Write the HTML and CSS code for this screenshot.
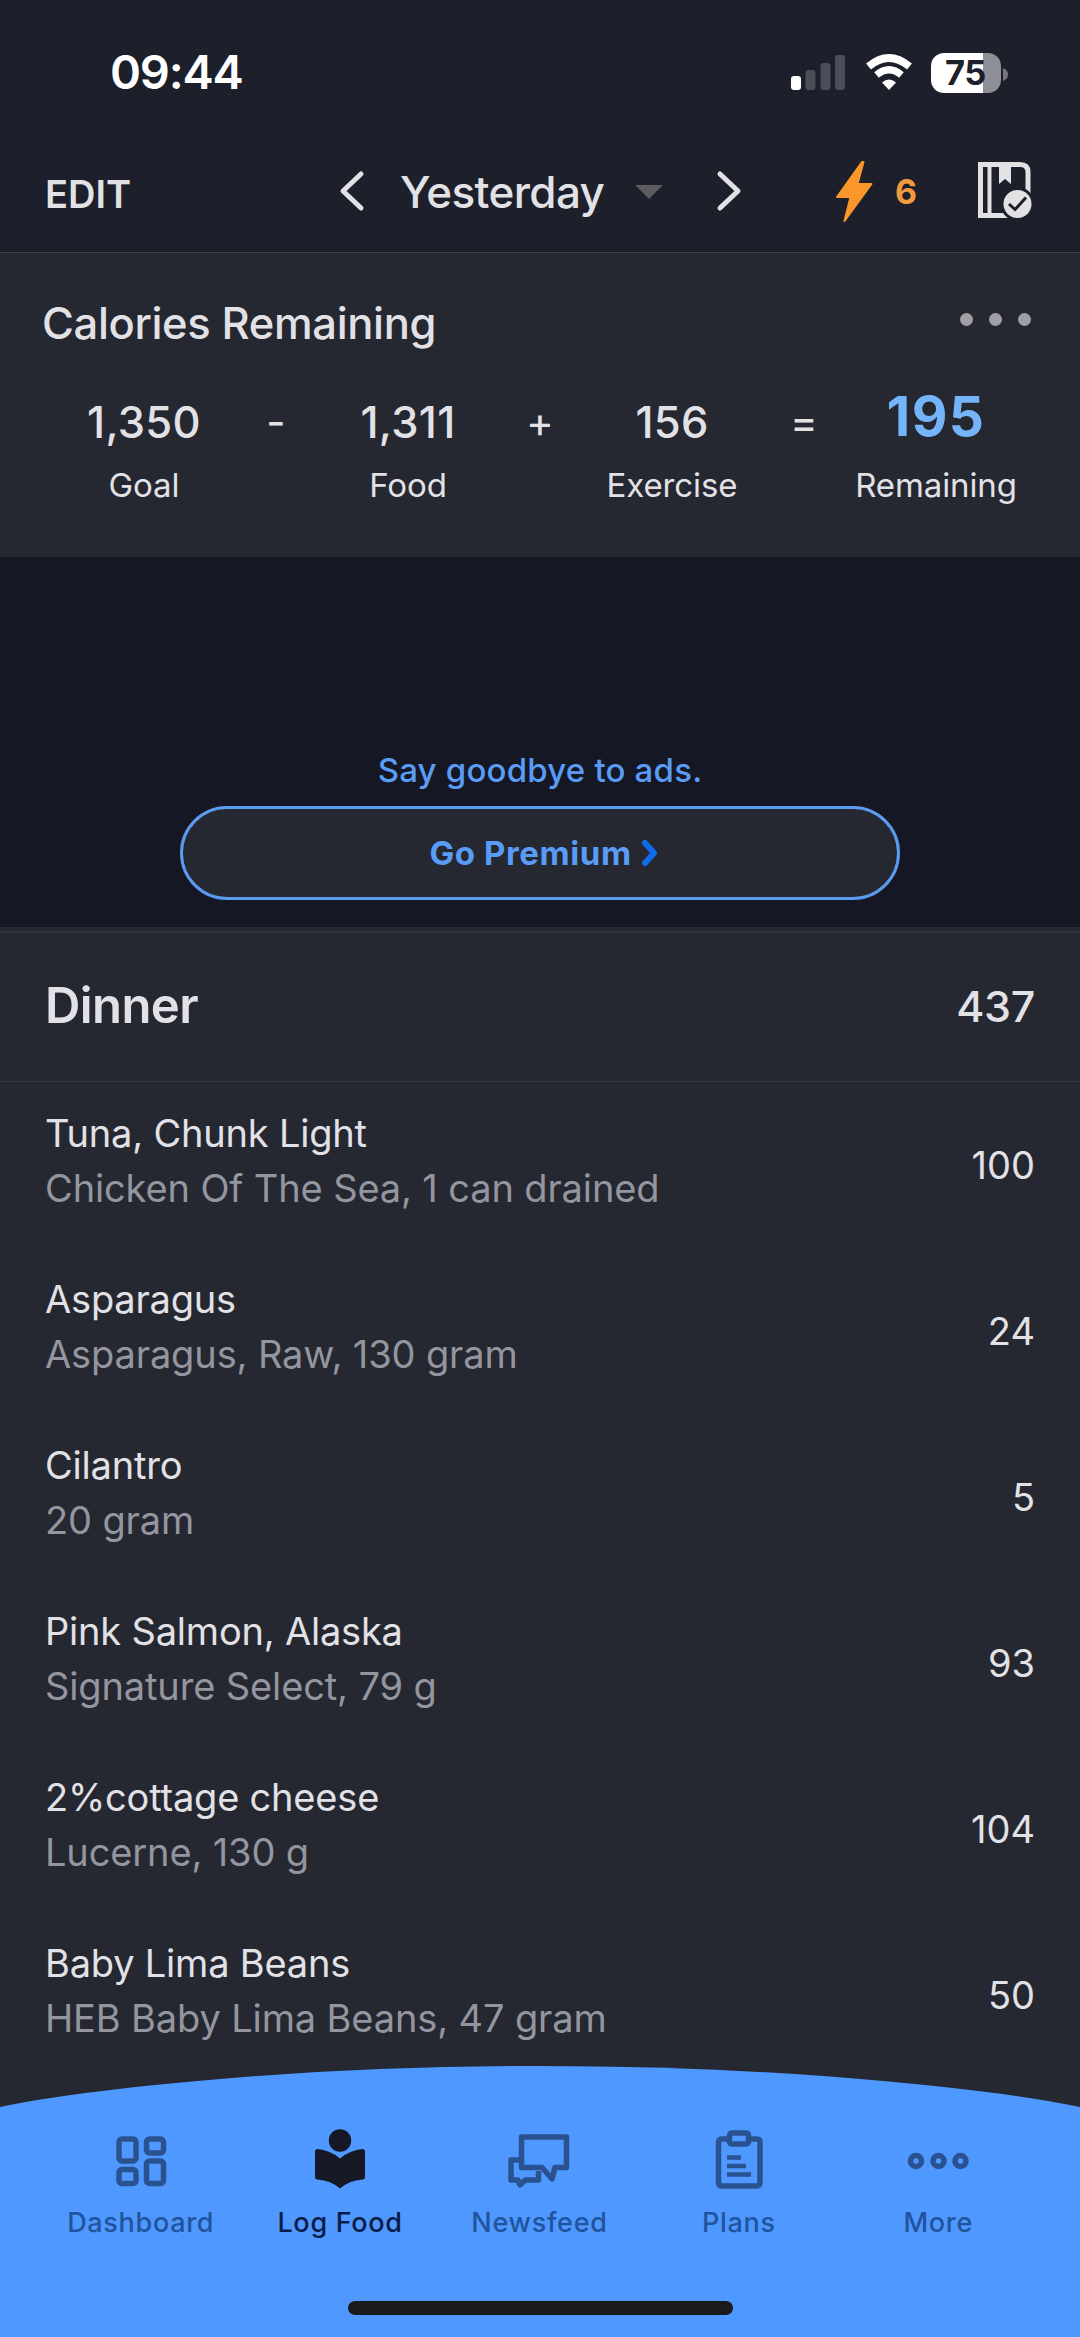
FILE: index.html
```html
<!DOCTYPE html>
<html lang="en">
<head>
<meta charset="utf-8">
<title>Diary</title>
<link rel="stylesheet" href="styles.css">
</head>
<body>
<div class="app">
  <div class="status">
    <span class="time">09:44</span>
    <div class="status-icons">
      <svg width="56" height="38" viewBox="0 0 56 38">
        <rect x="1" y="22" width="10" height="14" rx="3" fill="#fff"/>
        <g fill="#4c4d58"><rect x="15.500" y="16" width="10" height="20" rx="3"/><rect x="30.500" y="9" width="10" height="27" rx="3"/><rect x="45" y="1" width="10" height="35" rx="3"/></g>
      </svg>
      <svg class="wifi" width="48" height="38" viewBox="0 0 48 38" fill="none" stroke="#fff">
        <path d="M3.500 12.500Q24-4.500 44.500 12.500" stroke-width="7.500"/>
        <path d="M11.500 21Q24 10.500 36.500 21" stroke-width="7"/>
        <path d="M24 36L17 28.500Q24 22.500 31 28.500Z" fill="#fff" stroke="none"/>
      </svg>
      <div class="battery"><span class="level">75</span></div>
      <svg class="cap" width="5" height="13" viewBox="0 0 5 13"><path d="M0 0Q5 2 5 6.500T0 13Z" fill="#74757d"/></svg>
    </div>
  </div>
  <header class="nav">
    <span class="edit">EDIT</span>
    <svg class="prev" width="26" height="42" viewBox="0 0 26 42"><path d="M22 4L4 21L22 38"/></svg>
    <span class="day">Yesterday</span>
    <svg class="caret" width="28" height="14" viewBox="0 0 28 14"><path d="M0 0H28L14 14Z" fill="#5c5c5e"/></svg>
    <svg class="next" width="26" height="42" viewBox="0 0 26 42"><path d="M4 4L22 21L4 38"/></svg>
    <svg class="bolt" width="38" height="64" viewBox="0 0 38 64"><path d="M27 3L2 38H15.500L9.500 62L36.500 25H22.500L28.500 3Z" fill="#fa962b" stroke="#fa962b" stroke-width="2" stroke-linejoin="round"/></svg>
    <span class="streak">6</span>
    <svg class="book" width="54" height="58" viewBox="0 0 54 58" fill="none">
      <path d="M50 42V10Q50 2.500 42 2.500H2.500V53.500H36" stroke="#e2e2e4" stroke-width="5"/>
      <path d="M11.500 2V55" stroke="#e2e2e4" stroke-width="4"/>
      <path d="M21 2H33V22L27 17L21 22Z" fill="#e2e2e4"/>
      <circle cx="39.500" cy="42" r="15.500" fill="#e2e2e4" stroke="#1d1f2a" stroke-width="3"/>
      <path d="M31 42L37 47.500L48 35.500" stroke="#1d1f2a" stroke-width="3"/>
    </svg>
  </header>
  <section class="summary">
    <div class="summary-head"><h2>Calories Remaining</h2><div class="dots"><i></i><i></i><i></i></div></div>
    <div class="equation">
      <div class="term"><b>1,350</b><span>Goal</span></div>
      <div class="op">-</div>
      <div class="term"><b>1,311</b><span>Food</span></div>
      <div class="op">+</div>
      <div class="term"><b>156</b><span>Exercise</span></div>
      <div class="op">=</div>
      <div class="term total"><b>195</b><span>Remaining</span></div>
    </div>
  </section>
  <section class="ad">
    <div class="ad-text">Say goodbye to ads.</div>
    <div class="premium"><span>Go Premium</span><svg width="18" height="28" viewBox="0 0 18 28"><path d="M4 4L13 14L4 24"/></svg></div>
  </section>
  <section class="meal">
    <div class="meal-head"><h2>Dinner</h2><span>437</span></div>
    <div class="row"><div><p>Tuna, Chunk Light</p><p class="sub">Chicken Of The Sea, 1 can drained</p></div><span>100</span></div>
    <div class="row"><div><p>Asparagus</p><p class="sub">Asparagus, Raw, 130 gram</p></div><span>24</span></div>
    <div class="row"><div><p>Cilantro</p><p class="sub">20 gram</p></div><span>5</span></div>
    <div class="row"><div><p>Pink Salmon, Alaska</p><p class="sub">Signature Select, 79 g</p></div><span>93</span></div>
    <div class="row"><div><p>2%cottage cheese</p><p class="sub">Lucerne, 130 g</p></div><span>104</span></div>
    <div class="row"><div><p>Baby Lima Beans</p><p class="sub">HEB Baby Lima Beans, 47 gram</p></div><span>50</span></div>
  </section>
  <nav class="tabs">
    <svg class="arc" width="1080" height="43" viewBox="0 0 1080 43"><path d="M0 43V42Q80 25 250 11.500Q390 1 540 1T830 11.500Q1000 25 1080 42V43Z" fill="#4e98ff"/></svg>
    <div class="tab-row">
      <div class="tab">
        <svg width="64" height="64" viewBox="0 0 64 64" fill="none" stroke="#2a5290" stroke-width="5.500"><rect x="10" y="9" width="17" height="22" rx="3"/><rect x="37.500" y="9" width="17" height="14" rx="3"/><rect x="10" y="39.500" width="17" height="14" rx="3"/><rect x="37.500" y="31" width="17" height="22.500" rx="3"/></svg>
        <span>Dashboard</span></div>
      <div class="tab active">
        <svg width="64" height="64" viewBox="0 0 64 64" fill="#171826"><circle cx="32" cy="10.500" r="11.200"/><path d="M9.500 19Q22 20 32 28.500Q42 20 54.500 19Q57 19 57 22V47Q57 49.500 54.500 49.500Q41 50.500 32 58.500Q23 50.500 9.500 49.500Q7 49.500 7 47V22Q7 19 9.500 19Z"/></svg>
        <span>Log Food</span></div>
      <div class="tab">
        <svg width="64" height="64" viewBox="0 0 64 64" fill="none" stroke="#2a5290" stroke-width="5.500" stroke-linejoin="round"><path d="M14.500 7H59.500V37.500H48L45 49L35 37.500H14.500Z"/><path d="M13 30H4V50H11L13 55L18.500 50H31.500V41"/></svg>
        <span>Newsfeed</span></div>
      <div class="tab">
        <svg width="64" height="64" viewBox="0 0 64 64" fill="none" stroke="#2a5290" stroke-width="5.500"><path d="M20 9H15Q11.500 9 11.500 12.500V52.500Q11.500 56 15 56H49.500Q53 56 53 52.500V12.500Q53 9 49.500 9H44"/><rect x="22.500" y="3" width="19" height="11" rx="2"/><path d="M20 27.500H34M20 36H39M20 44.500H44" stroke-width="4.500"/></svg>
        <span>Plans</span></div>
      <div class="tab">
        <svg width="64" height="64" viewBox="0 0 64 64" fill="none" stroke="#2a5290" stroke-width="5.500"><circle cx="10" cy="31" r="5.500"/><circle cx="32.500" cy="31" r="5.500"/><circle cx="54.500" cy="31" r="5.500"/></svg>
        <span>More</span></div>
    </div>
    <div class="home"></div>
  </nav>
</div>
</body>
</html>
```
FILE: styles.css
```css
* { box-sizing: border-box; margin: 0; padding: 0; }
body { width: 1080px; background: #252731; font-family: Inter, "Liberation Sans", sans-serif; color: #e2e2e6; }
svg { display: block; flex: none; }
.app { width: 1080px; height: 2337px; overflow: hidden; display: flex; flex-direction: column; background: #252731; }
.status { height: 144px; flex: none; background: #1d1f2a; display: flex; justify-content: space-between; padding: 0 72px 0 110px; color: #fff; }
.time { font-size: 47px; line-height: 56px; margin-top: 44px; font-weight: 600; letter-spacing: -1.2px; }
.status-icons { display: flex; margin-top: 54px; height: 40px; }
.wifi { margin-left: 19px; }
.battery { width: 70px; height: 40px; margin: -1px 0 0 18px; border-radius: 13px; background: linear-gradient(90deg, #fff 0 52px, #8e8e96 52px); }
.level { display: block; font-size: 34.5px; line-height: 39px; font-weight: 700; color: #1d1f2a; padding-left: 14px; letter-spacing: -0.5px; }
.cap { margin: 14px 0 0 2px; }
.nav { height: 109px; flex: none; background: #1d1f2a; border-bottom: 1px solid #3e404b; display: flex; align-items: flex-start; padding-left: 45px; }
.edit { font-size: 38px; line-height: 46px; margin-top: 27px; width: 294px; font-weight: 600; }
.prev, .next { margin-top: 26px; fill: none; stroke: #e2e2e6; stroke-width: 5; stroke-linecap: round; stroke-linejoin: round; }
.day { font-size: 44px; line-height: 54px; margin: 21px 0 0 35px; width: 235px; font-weight: 500; letter-spacing: -0.6px; white-space: nowrap; }
.caret { margin-top: 41px; }
.next { margin-left: 53px; }
.bolt { margin: 15px 0 0 93px; }
.streak { font-size: 34px; line-height: 42px; margin: 27px 0 0 22px; width: 83px; color: #ef9a3d; font-weight: 700; }
.book { margin-top: 18px; }
.summary { height: 304px; flex: none; }
.summary-head { display: flex; justify-content: space-between; padding: 43px 49px 0 42px; height: 142px; }
.summary-head h2 { font-size: 43.5px; line-height: 54px; font-weight: 500; letter-spacing: -0.35px; }
.dots { display: flex; gap: 16px; margin-top: 17px; }
.dots i { width: 13px; height: 13px; border-radius: 50%; background: #a0a0a4; }
.equation { display: grid; grid-template-columns: 180px 84px 180px 84px 180px 84px 180px; margin-left: 54px; }
.term { text-align: center; }
.term b { display: block; font-weight: 500; font-size: 43.5px; line-height: 54px; letter-spacing: 0.3px; }
.term span { display: block; font-size: 33px; line-height: 40px; margin-top: 16px; letter-spacing: -0.1px; }
.total b { color: #73b5f8; font-size: 55px; font-weight: 700; line-height: 54px; letter-spacing: 1.4px; position: relative; top: -6px; }
.op { text-align: center; font-size: 42px; line-height: 54px; }
.ad { height: 370px; flex: none; background: #151724; padding-top: 193px; text-align: center; }
.ad-text { color: #5a9cf5; font-size: 33px; line-height: 40px; font-weight: 500; letter-spacing: 0.2px; }
.premium { width: 720px; height: 94px; margin: 16px auto 0; border: 3px solid #5a9bf0; border-radius: 47px; background: #252731; display: flex; align-items: center; justify-content: center; gap: 9px; padding-left: 8px; color: #5a9cf5; font-size: 33px; font-weight: 700; letter-spacing: 0.6px; }
.premium svg { fill: none; stroke: #0f6be8; stroke-width: 6; stroke-linecap: round; stroke-linejoin: round; }
.meal { flex: 1; min-height: 0; border-top: 4px solid #272933; overflow: hidden; }
.meal-head { height: 151px; border-top: 2px solid #30323c; border-bottom: 1px solid #343641; display: flex; align-items: center; justify-content: space-between; padding: 0 45px 3px; }
.meal-head h2 { font-size: 49px; font-weight: 600; letter-spacing: -0.6px; }
.meal-head span { font-size: 43px; font-weight: 500; letter-spacing: -0.3px; }
.row { height: 166px; display: flex; justify-content: space-between; padding: 24px 45px 0; font-size: 38px; letter-spacing: -0.2px; }
.row p { line-height: 55px; }
.row .sub { color: #94969f; letter-spacing: -0.13px; }
.row > span { line-height: 48px; margin-top: 35px; letter-spacing: 0; }
.tabs { height: 272px; background: #4e98ff; position: absolute; left: 0; top: 2065px; width: 1080px; }
.arc { background: #252731; }
.tab-row { display: grid; grid-template-columns: repeat(5, 199.4px); padding: 22px 0 0 41px; }
.tab { display: flex; flex-direction: column; align-items: center; font-size: 27px; color: #22549d; letter-spacing: 0.7px; font-weight: 500; }
.tab svg { overflow: visible; }
.tab span { line-height: 34px; margin-top: 12px; }
.active { color: #0a1c46; }
.home { width: 385px; height: 14px; border-radius: 7px; background: #191a1b; margin: 61px auto 0; }
```
